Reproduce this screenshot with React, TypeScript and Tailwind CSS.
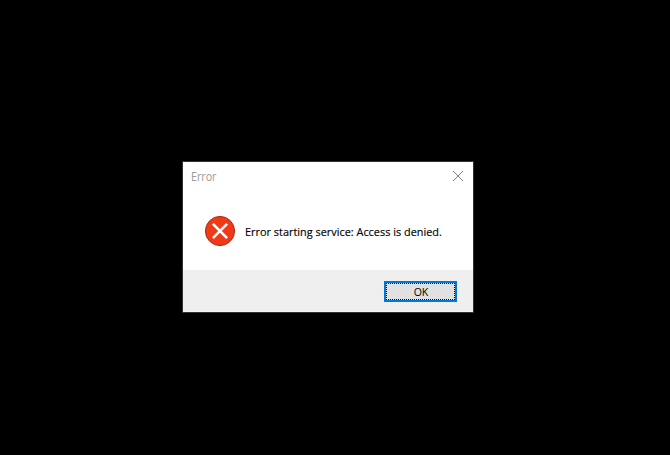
function ErrorIcon() {
  return (
    <svg width="32" height="32" viewBox="0 0 32 32" className="shrink-0" aria-hidden="true">
      <circle cx="16" cy="16" r="14.6" fill="#f03a17" stroke="#a92b10" strokeWidth="1" />
      <path d="M8.9 8.9 23.1 23.1M23.1 8.9 8.9 23.1" stroke="#fff" strokeWidth="2.6" fill="none" />
    </svg>
  );
}

function CloseIcon() {
  return (
    <svg width="10" height="10" viewBox="0 0 10 10" aria-hidden="true">
      <path d="M0 0 10 10M10 0 0 10" stroke="#808080" strokeWidth="1" fill="none" />
    </svg>
  );
}

export default function App() {
  return (
    <main className="flex h-[455px] w-[670px] items-start bg-black pt-[161px] pl-[182px] font-['Open_Sans','Noto_Sans',sans-serif] text-[11.5px] leading-4">
      <section role="dialog" className="flex h-[152px] w-[292px] flex-col border border-[#323232] bg-white">
        <header className="flex h-[30px] items-start justify-between pt-[7px] pr-[10px] pl-2 text-xs text-[#999]">
          <h1 className="w-max origin-left scale-x-[0.89] whitespace-nowrap">Error</h1>
          <button aria-label="Close" className="mt-[2px] flex size-[10px] items-center justify-center">
            <CloseIcon />
          </button>
        </header>
        <div className="flex h-[78px] items-start pt-[23px] pl-[21px] text-black">
          <ErrorIcon />
          <p className="mt-[9px] ml-[9px] origin-left scale-x-[0.948] whitespace-nowrap [-webkit-text-stroke:0.15px_black]">
            Error starting service: Access is denied.
          </p>
        </div>
        <footer className="flex h-[42px] items-start justify-end border-b border-[#f4f4f4] bg-[#efefef] pt-[11px] pr-4">
          <button className="h-[21px] w-[73px] border-2 border-[#0078d7] bg-[#e1e1e1] text-black">
            <span className="flex h-full items-center justify-center border border-dotted border-black">
              <span className="scale-x-[0.92]">OK</span>
            </span>
          </button>
        </footer>
      </section>
    </main>
  );
}
